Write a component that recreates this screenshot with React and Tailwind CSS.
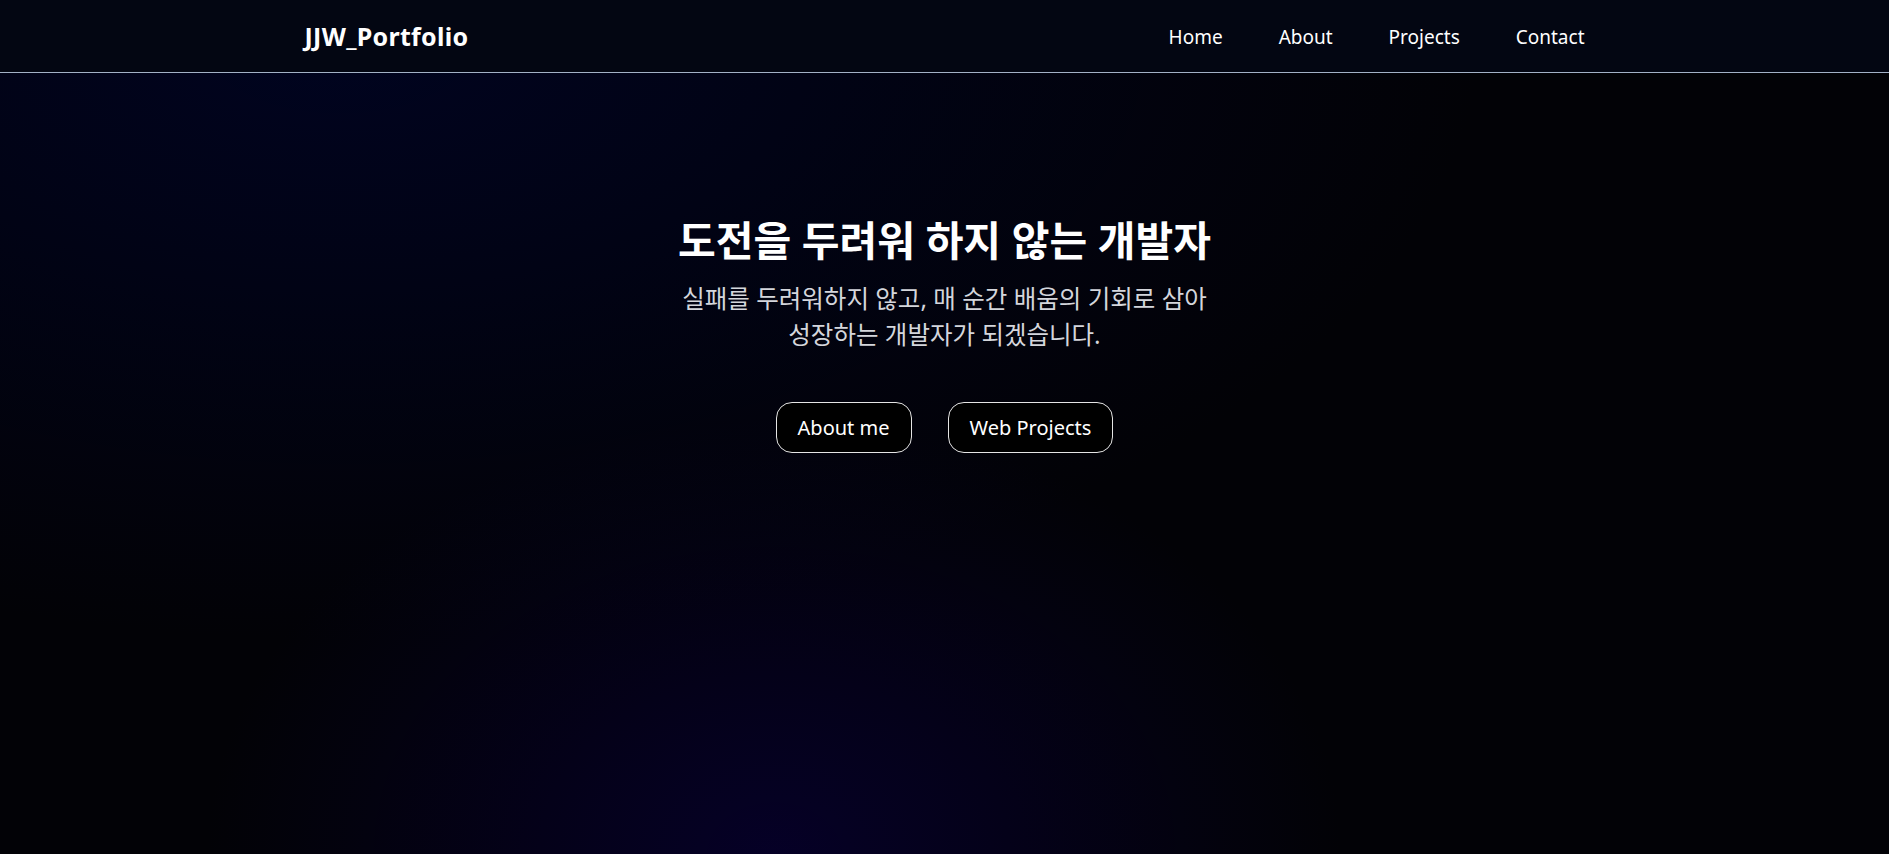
import React from "react";

const navItems = ["Home", "About", "Projects", "Contact"];

function Header() {
  return (
    <header className="h-[73px] border-b border-[#a3b1c6] bg-[#030612]">
      <div className="mx-auto flex h-full max-w-[1280px] items-center justify-between pt-[2px]">
        <a className="text-[25px] font-bold text-white tracking-[0.3px]">JJW_Portfolio</a>
        <nav className="flex items-center gap-[56px]">
          {navItems.map((item) => (
            <a key={item} className="text-[19px] text-white">
              {item}
            </a>
          ))}
        </nav>
      </div>
    </header>
  );
}

function Hero() {
  return (
    <section className="flex flex-col items-center pt-[141px] text-center">
      <h1 className="text-[41px] font-bold leading-[52px] text-white">도전을 두려워 하지 않는 개발자</h1>
      <p className="mt-[15px] text-[24.5px] leading-[36px] text-[#d4d6dc]">
        실패를 두려워하지 않고, 매 순간 배움의 기회로 삼아
        <br />
        성장하는 개발자가 되겠습니다.
      </p>
      <div className="mt-[49px] flex gap-[36px]">
        <button className="h-[51px] rounded-[16px] border border-[#e5e5e5] bg-black px-[21px] text-[20px] text-white">
          About me
        </button>
        <button className="h-[51px] rounded-[16px] border border-[#e5e5e5] bg-black px-[21px] text-[20px] text-white">
          Web Projects
        </button>
      </div>
    </section>
  );
}

export default function App() {
  return (
    <div
      className="min-h-[854px] bg-[#020206] bg-[radial-gradient(ellipse_at_18%_5%,rgba(0,4,36,0.85),transparent_52%),radial-gradient(ellipse_at_41%_100%,rgba(6,0,44,0.85),transparent_36%)] font-['Noto_Sans','Noto_Sans_CJK_KR',sans-serif]"
    >
      <Header />
      <Hero />
    </div>
  );
}
